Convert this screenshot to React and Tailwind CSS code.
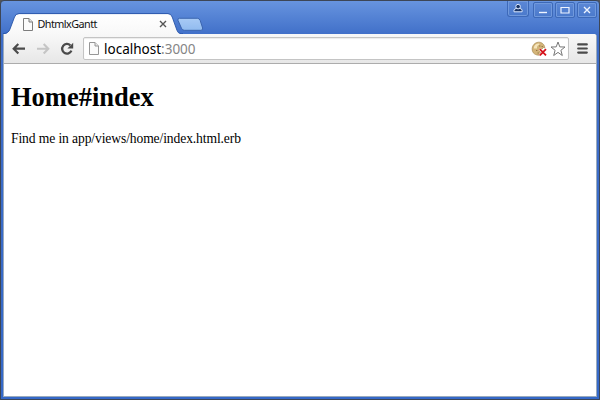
import React from "react";

function PageIcon({ className }) {
  return (
    <svg className={className} viewBox="0 0 10 13" fill="#fbfbfb" stroke="#7d7d7d" strokeWidth="1">
      <path d="M.5 .5H6L9.5 4V12.5H.5Z" />
      <path d="M6 .5V4H9.5" fill="#e4e4e4" />
    </svg>
  );
}

function WindowButton({ className, children }) {
  return (
    <div className={`h-[16px] shrink-0 border border-[#3d69b8] bg-linear-to-b from-[#5c88d6] to-[#4a79cb] shadow-[inset_0_0_0_1px_#7099dc] ${className}`}>
      <svg className="block h-[14px] w-full" viewBox="0 0 18 14" fill="none" stroke="#eef4ff">
        {children}
      </svg>
    </div>
  );
}

function TitleBar() {
  return (
    <header className="relative flex h-[33px] justify-between">
      <svg className="absolute -left-[2px] top-0 h-[33px] w-[220px]" viewBox="1 1 220 33">
        <defs>
          <linearGradient id="tab" x1="0" y1="0" x2="0" y2="1">
            <stop offset="0" stopColor="#ffffff" />
            <stop offset="1" stopColor="#f8f8f8" />
          </linearGradient>
          <linearGradient id="newtab" x1="0" y1="0" x2="0" y2="1">
            <stop offset="0" stopColor="#a8caf5" />
            <stop offset="1" stopColor="#91bbef" />
          </linearGradient>
        </defs>
        <path d="M3 34.5C7 34 9 32 10 29L14.5 17Q15.7 14 19 14H168Q171 14 172.2 17L176.5 29C177.7 32.5 178.5 34 183 34.5Z" fill="url(#tab)" />
        <path d="M3 33.7C7 33.5 9 32 10 29L14.5 17Q15.7 13.6 19 13.6H168Q171 13.6 172.2 17L176.5 29C177.7 32.5 178.5 33.7 183 33.7" fill="none" stroke="#2855a8" strokeWidth=".9" />
        <path d="M179.5 18.3H197.3Q199.3 18.3 200.1 20.3L202.6 28Q203.2 30.3 200.7 30.3H184.5Q182.3 30.3 181.5 28.3L178 20.3Q177.4 18.3 179.5 18.3Z" fill="url(#newtab)" stroke="#355fa9" strokeWidth=".9" />
      </svg>
      <div className="relative flex h-full w-[172px] items-center pt-[13px] pl-[20px]">
        <PageIcon className="h-[13px] w-[10px] shrink-0" />
        <span className="ml-[4.5px] w-[121.5px] text-[10.8px] leading-[14px] tracking-[-0.55px] whitespace-nowrap text-[#111]">DhtmlxGantt</span>
        <svg className="size-[8px] shrink-0" viewBox="0 0 8 8" stroke="#555" strokeWidth="1.4">
          <path d="M1 1L7 7M7 1L1 7" />
        </svg>
      </div>
      <div className="relative flex items-start">
        <WindowButton className="mr-[4px] w-[22px] rounded-b-[3px] border-t-0">
          <g stroke="#dce9ff" strokeWidth="1">
            <path d="M5 10.8V9.2Q5.2 7.8 7.2 7.5H11Q12.9 7.8 13.1 9.2V10.8Z" fill="#1a3566" />
            <circle cx="9.1" cy="5.6" r="2.3" fill="#1a3566" />
          </g>
        </WindowButton>
        <div className="flex gap-[2px] pt-[1px]">
          <WindowButton className="w-[20px] rounded-[2px]">
            <path d="M5 9.5H13" strokeWidth="1.4" />
          </WindowButton>
          <WindowButton className="w-[20px] rounded-[2px]">
            <path d="M5 4.5H13V10H5Z" strokeWidth="1.2" />
          </WindowButton>
          <WindowButton className="w-[20px] rounded-[2px]">
            <path d="M6 4L12 10M12 4L6 10" strokeWidth="1.4" />
          </WindowButton>
        </div>
      </div>
    </header>
  );
}

function CookieIcon() {
  return (
    <svg className="h-[16px] w-[17px] shrink-0" viewBox="0 0 17 16">
      <path d="M7.5 1.2C10.3 1 13.6 3 13.8 7L12.4 6.5L11 8L9.3 8.6L9 11L11 13.4C8 15 3 14 1.7 10.7C0 6.5 2.5 1.6 7.5 1.2Z" fill="#d3b478" stroke="#a98c55" strokeWidth=".7" />
      <path d="M2.8 7.5Q3 3.2 7.3 2.5Q9 2.6 8.4 3.5Q5.7 4.7 6 7.5Z" fill="#f5e5bb" />
      <path d="M8 5h1.4M10.6 5.5h1.3M5 9.5h1.4M6.5 12h1.4" stroke="#947444" strokeWidth="1.1" />
      <path d="M8.8 8.2L15 14.4M15 8.2L8.8 14.4" stroke="#fff" strokeWidth="2.6" />
      <path d="M8.8 8.2L15 14.4M15 8.2L8.8 14.4" stroke="#d5101a" strokeWidth="1.8" />
    </svg>
  );
}

function Toolbar() {
  return (
    <div className="flex h-[30px] items-center border-b border-[#acacac] bg-linear-to-b from-[#f8f8f8] to-[#e7e7e7] pl-[8px]">
      <svg className="h-[12px] w-[14px] shrink-0" viewBox="0 0 14 12" fill="none" stroke="#4b4b4b" strokeWidth="2.2">
        <path d="M13 5.7H2M6.3 1L1.7 5.7L6.3 10.4" />
      </svg>
      <svg className="ml-[10px] h-[12px] w-[14px] shrink-0" viewBox="0 0 14 12" fill="none" stroke="#c5c5c5" strokeWidth="2.1">
        <path d="M1 5.7H12M7.7 1L12.3 5.7L7.7 10.4" />
      </svg>
      <svg className="ml-[10px] size-[14px] shrink-0" viewBox="0 0 14 14">
        <path d="M11.4 8.6A4.8 4.8 0 1 1 10.3 3.3" fill="none" stroke="#4b4b4b" strokeWidth="2.3" />
        <path d="M13.2 .8V6.4H7.4Z" fill="#4b4b4b" />
      </svg>
      <div className="ml-[8.5px] flex h-[23px] w-[486.5px] shrink-0 items-center rounded-[2px] border border-[#c4c4c4] bg-white pl-[5.5px] shadow-[inset_0_1px_1px_#ececec]">
        <PageIcon className="h-[13px] w-[10px] shrink-0 opacity-80" />
        <span className="ml-[5px] flex-1 text-[13.5px] leading-[20px] text-black">
          localhost<span className="text-[#858585]">:3000</span>
        </span>
        <CookieIcon />
        <svg className="mr-[2.5px] ml-[1.5px] size-[16px] shrink-0" viewBox="0 0 16 16" fill="#fff" stroke="#777" strokeWidth="1">
          <path d="M8 1L9.8 5.9L15 6L10.9 9.3L12.3 14.5L8 11.4L3.7 14.5L5.1 9.3L1 6L6.2 5.9Z" />
        </svg>
      </div>
      <svg className="ml-[8px] h-[11px] w-[11px] shrink-0" viewBox="0 0 11 11" stroke="#4b4b4b" strokeWidth="2.2" strokeLinecap="round">
        <path d="M1.2 1.4H9.8M1.2 5.5H9.8M1.2 9.6H9.8" />
      </svg>
    </div>
  );
}

export default function App() {
  return (
    <div className="h-[400px] w-[600px] overflow-hidden bg-[#555] font-['Noto_Sans','Open_Sans',sans-serif]">
      <div className="flex h-full flex-col rounded-t-[4px] border border-[#3d4656] bg-[#3569c8] bg-linear-to-b from-[#6794df] via-[#3e6dc7] via-[9%] to-[#3569c8] px-[2px] pb-[2px]">
        <TitleBar />
        <div className="flex min-h-0 flex-1 flex-col overflow-hidden rounded-tr-[3px] border-x border-b border-[#9aaabd] bg-white">
          <Toolbar />
          <main className="pl-[7px] font-['Liberation_Serif',serif] text-black">
            <h1 className="mt-[18px] text-[26.5px] leading-[31px] font-bold">Home#index</h1>
            <p className="mt-[18px] text-[13.6px] leading-[15px] tracking-[-0.115px]">Find me in app/views/home/index.html.erb</p>
          </main>
        </div>
      </div>
    </div>
  );
}
